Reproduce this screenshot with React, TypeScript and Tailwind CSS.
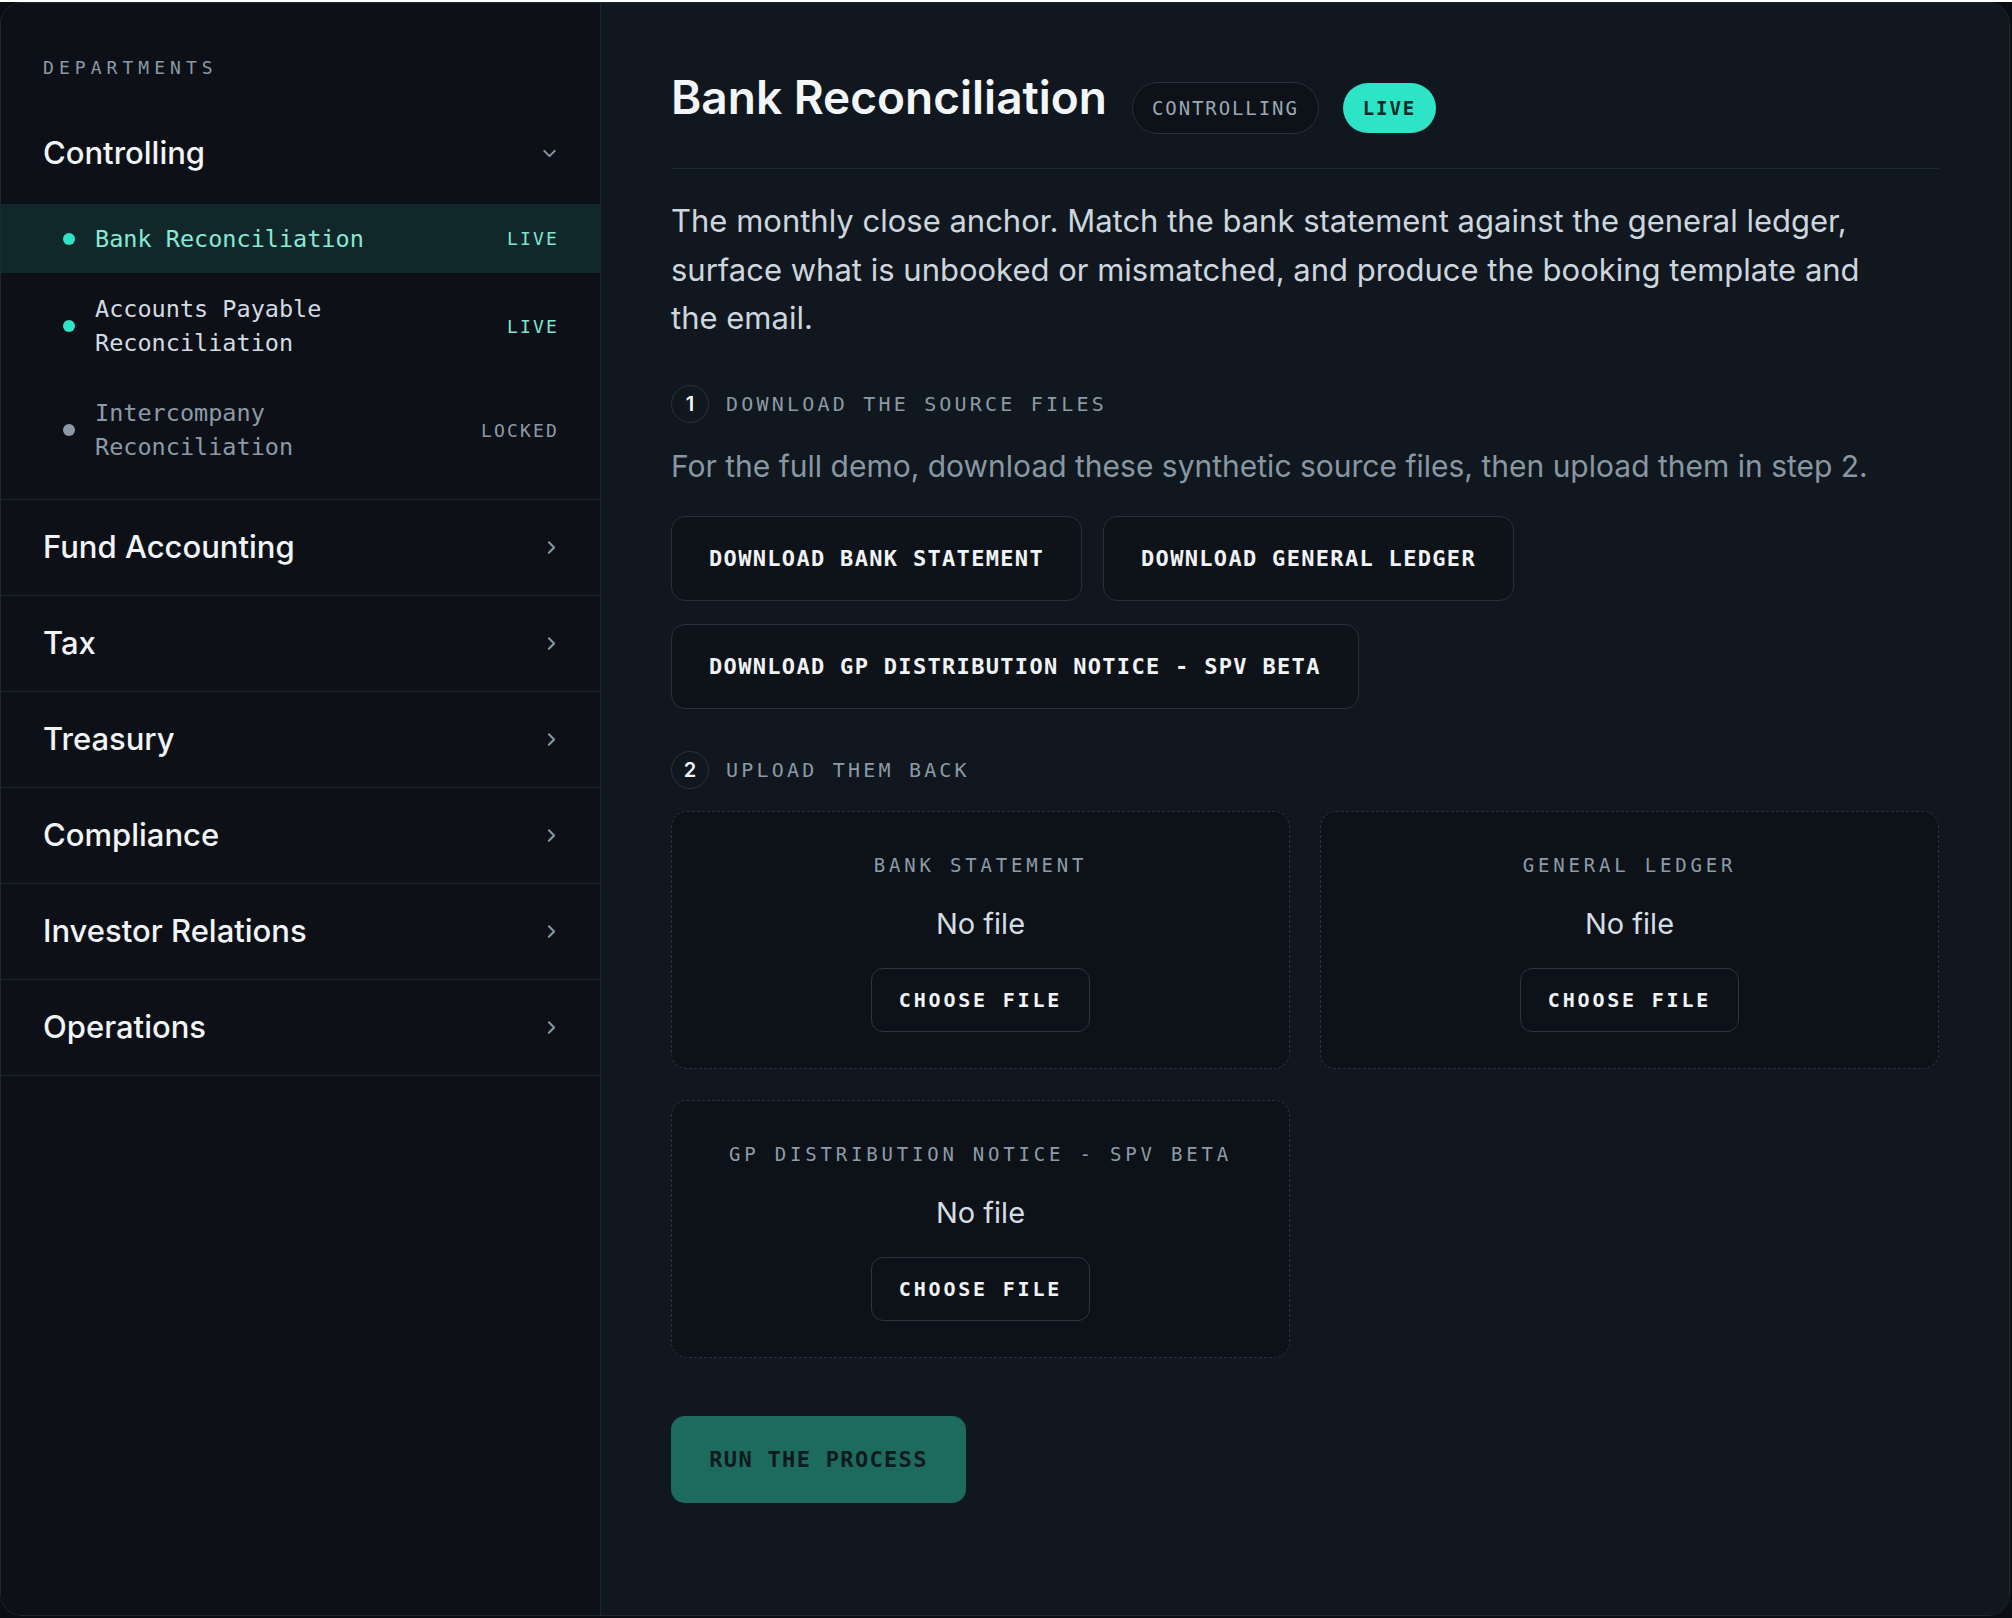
import { ChevronDown, ChevronRight } from "lucide-react";

const sans = "font-['Inter',sans-serif]";
const mono = "font-['DejaVu_Sans_Mono',monospace]";

type Status = "live" | "locked";

const processes: { name: string; status: Status; active?: boolean }[] = [
  { name: "Bank Reconciliation", status: "live", active: true },
  { name: "Accounts Payable Reconciliation", status: "live" },
  { name: "Intercompany Reconciliation", status: "locked" },
];

const departments = [
  "Fund Accounting",
  "Tax",
  "Treasury",
  "Compliance",
  "Investor Relations",
  "Operations",
];

const uploads = [
  "BANK STATEMENT",
  "GENERAL LEDGER",
  "GP DISTRIBUTION NOTICE - SPV BETA",
];

function ProcessItem({
  name,
  status,
  active,
}: {
  name: string;
  status: Status;
  active?: boolean;
}) {
  return (
    <li
      className={`flex min-h-[69px] items-center py-[17px] pl-[62px] pr-[41px] ${
        active ? "bg-[#11282a]" : ""
      }`}
    >
      <span
        className={`h-[12px] w-[12px] shrink-0 rounded-full ${
          status === "live" ? "bg-[#2ee3c6]" : "bg-[#8d9aa6]"
        }`}
      />
      <span
        className={`ml-[20px] max-w-[330px] flex-1 text-[23.5px] leading-[34px] ${mono} ${
          active
            ? "text-[#86ead6]"
            : status === "live"
            ? "text-[#d3dbe2]"
            : "text-[#8c9aa6]"
        }`}
      >
        {name}
      </span>
      <span
        className={`ml-auto text-[18px] tracking-[0.12em] ${mono} ${
          status === "live" ? "text-[#7fe3cf]" : "text-[#8c9aa6]"
        }`}
      >
        {status === "live" ? "LIVE" : "LOCKED"}
      </span>
    </li>
  );
}

function Sidebar() {
  return (
    <aside className="w-[600px] shrink-0 border-r border-[#1c2730] bg-[#0d1117] pt-[53px]">
      <div
        className={`px-[42px] text-[18px] leading-[24px] tracking-[0.28em] text-[#8b99a6] ${mono}`}
      >
        DEPARTMENTS
      </div>

      {/* Controlling (open) */}
      <section className="mt-[26px] border-b border-[#1c2730]">
        <div className="flex h-[95px] items-center justify-between pl-[42px] pr-[40px]">
          <span className="text-[31px] font-medium text-[#f2f5f8]">
            Controlling
          </span>
          <ChevronDown className="h-[21px] w-[21px] text-[#8a98a4]" strokeWidth={2.25} />
        </div>
        <ul className="mt-[3px] flex flex-col gap-[2px] pb-[18px]">
          {processes.map((p) => (
            <ProcessItem key={p.name} {...p} />
          ))}
        </ul>
      </section>

      {departments.map((d) => (
        <div
          key={d}
          className="flex h-[96px] items-center justify-between border-b border-[#1c2730] pl-[42px] pr-[38px]"
        >
          <span className="text-[31px] font-medium text-[#f2f5f8]">{d}</span>
          <ChevronRight className="h-[21px] w-[21px] text-[#8a98a4]" strokeWidth={2.25} />
        </div>
      ))}
    </aside>
  );
}

function StepHeading({ n, label }: { n: number; label: string }) {
  return (
    <div className="flex items-center gap-[17px]">
      <span
        className={`flex h-[38px] w-[38px] items-center justify-center rounded-full border-[1.5px] border-[#26323c] text-[20px] font-semibold text-[#f3f6f9] ${sans}`}
      >
        {n}
      </span>
      <span
        className={`text-[20px] tracking-[0.16em] text-[#8a9aa6] ${mono}`}
      >
        {label}
      </span>
    </div>
  );
}

function DownloadButton({ label }: { label: string }) {
  return (
    <button
      className={`h-[85px] rounded-[14px] border border-[#26313b] bg-[#0e1319] px-[37px] text-[22px] font-bold tracking-[0.06em] text-[#f1f4f7] ${mono}`}
    >
      {label}
    </button>
  );
}

function UploadCard({ label }: { label: string }) {
  return (
    <div className="flex flex-col items-center rounded-[16px] border-[1.5px] border-dashed border-[#27333d] bg-[#0d1218] pb-[36px] pt-[41px]">
      <span
        className={`text-[19px] leading-[24px] tracking-[0.2em] text-[#8d9ca8] ${mono}`}
      >
        {label}
      </span>
      <span className="mt-[29px] text-[29px] leading-[36px] text-[#d5dde4]">
        No file
      </span>
      <button
        className={`mt-[26px] h-[64px] w-[219px] rounded-[12px] border border-[#2a3640] bg-[#0d1218] text-[20px] font-bold tracking-[0.14em] text-[#f1f4f7] ${mono}`}
      >
        CHOOSE FILE
      </button>
    </div>
  );
}

export default function App() {
  return (
    <div className={`min-h-screen w-full bg-[#0a0d12] ${sans}`}>
      <div className="mt-[2px] flex h-[1614px] w-[2010px] overflow-hidden rounded-[22px] border border-[#1e2830]">
        <Sidebar />

        <main className="flex-1 bg-[#11171e] pl-[70px] pr-[70px] pt-[67px]">
          {/* Header */}
          <div className="flex items-start gap-[25px] border-b border-[#1e2a33] pb-[34px]">
            <h1 className="text-[46px] font-semibold leading-[54px] text-[#f3f6f9]">
              Bank Reconciliation
            </h1>
            <div className="mt-[12px] flex items-center gap-[24px]">
              <span
                className={`flex h-[52px] items-center rounded-full border-[1.5px] border-[#25313b] bg-[#0d1218] px-[19px] text-[19px] tracking-[0.1em] text-[#9aa8b4] ${mono}`}
              >
                CONTROLLING
              </span>
              <span
                className={`flex h-[50px] items-center rounded-full bg-[#2ee4c7] px-[20px] text-[19px] font-semibold tracking-[0.1em] text-[#062b25] ${mono}`}
              >
                LIVE
              </span>
            </div>
          </div>

          <p className="mt-[28px] max-w-[1230px] text-[31px] leading-[48.5px] text-[#cdd6de]">
            The monthly close anchor. Match the bank statement against the
            general ledger, surface what is unbooked or mismatched, and produce
            the booking template and the email.
          </p>

          {/* Step 1 */}
          <div className="mt-[42px]">
            <StepHeading n={1} label="DOWNLOAD THE SOURCE FILES" />
          </div>
          <p className="mt-[22px] text-[30px] leading-[42px] text-[#8797a3]">
            For the full demo, download these synthetic source files, then
            upload them in step 2.
          </p>
          <div className="mt-[29px] flex max-w-[900px] flex-wrap gap-x-[21px] gap-y-[23px]">
            <DownloadButton label="DOWNLOAD BANK STATEMENT" />
            <DownloadButton label="DOWNLOAD GENERAL LEDGER" />
            <DownloadButton label="DOWNLOAD GP DISTRIBUTION NOTICE - SPV BETA" />
          </div>

          {/* Step 2 */}
          <div className="mt-[42px]">
            <StepHeading n={2} label="UPLOAD THEM BACK" />
          </div>
          <div className="mt-[22px] grid grid-cols-2 gap-x-[30px] gap-y-[31px]">
            {uploads.map((u) => (
              <UploadCard key={u} label={u} />
            ))}
          </div>

          <button
            className={`mt-[58px] h-[87px] w-[295px] rounded-[14px] bg-[#1d6a5f] text-[22px] font-bold tracking-[0.06em] text-[#0b1b1b] ${mono}`}
          >
            RUN THE PROCESS
          </button>
        </main>
      </div>
    </div>
  );
}
